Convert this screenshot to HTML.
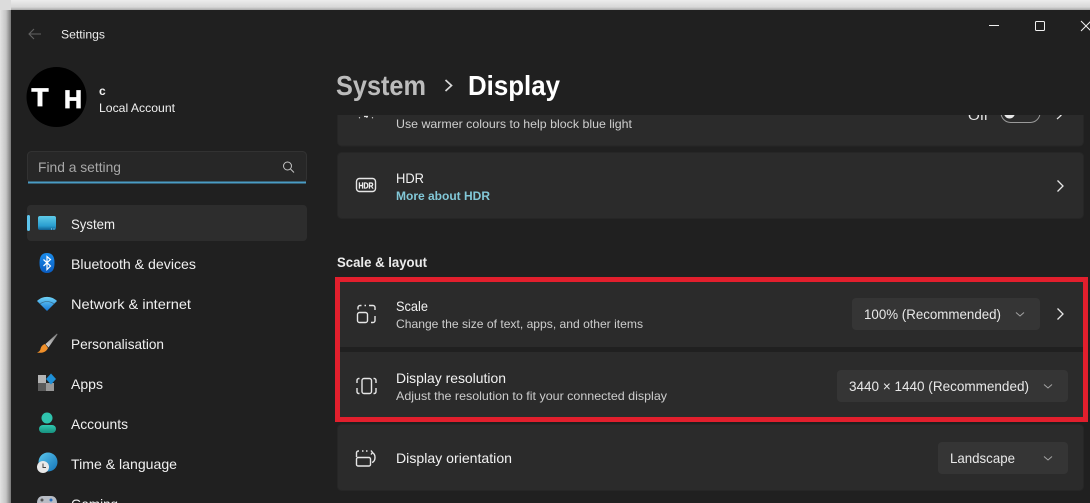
<!DOCTYPE html>
<html><head><meta charset="utf-8"><title>Settings</title>
<style>
html,body{margin:0;padding:0;background:#202020;width:1090px;height:503px;overflow:hidden}
svg{display:block}
text{font-family:"Liberation Sans",sans-serif;white-space:pre}
.n{font-size:14px;fill:#f0f0f0}
.t{font-size:14px;fill:#f2f2f2}
.s{font-size:12px;fill:#cdcdcd}
.d{font-size:14px;fill:#e8e8e8}
.c{fill:none;stroke:#a4a4a4;stroke-width:1}
.i{fill:none;stroke:#e6e6e6;stroke-width:1.4}
.card{fill:#2b2b2b;stroke:#262626;stroke-width:1}
.dd{fill:#353535}
</style></head><body>
<svg width="1090" height="503" viewBox="0 0 1090 503" xmlns="http://www.w3.org/2000/svg">
<defs>
<linearGradient id="gl" x1="0" x2="1" y1="0" y2="0"><stop offset="0" stop-color="#e2e2e2"/><stop offset=".55" stop-color="#c4c4c4"/><stop offset="1" stop-color="#777"/></linearGradient>
<linearGradient id="gt" x1="0" x2="0" y1="0" y2="1"><stop offset="0" stop-color="#ececec"/><stop offset=".7" stop-color="#d8d8d8"/><stop offset="1" stop-color="#a8a8a8"/></linearGradient>
<linearGradient id="sys" x1="0" x2="0" y1="0" y2="1"><stop offset="0" stop-color="#5fcbe8"/><stop offset=".7" stop-color="#2a9ed0"/><stop offset="1" stop-color="#0f5f92"/></linearGradient>
<linearGradient id="bt" x1="0" x2="0" y1="0" y2="1"><stop offset="0" stop-color="#1a8cec"/><stop offset="1" stop-color="#0a5cc0"/></linearGradient>
<linearGradient id="wf" x1="0" x2="0" y1="0" y2="1"><stop offset="0" stop-color="#6fd2f5"/><stop offset="1" stop-color="#1578d8"/></linearGradient>
<linearGradient id="ac" x1="0" x2="0" y1="0" y2="1"><stop offset="0" stop-color="#30c8b0"/><stop offset="1" stop-color="#17907f"/></linearGradient>
<linearGradient id="gb" x1="0" x2="1" y1="0" y2="1"><stop offset="0" stop-color="#5cc8ee"/><stop offset="1" stop-color="#1473b8"/></linearGradient>
<linearGradient id="br" x1="1" x2="0" y1="0" y2="1"><stop offset="0" stop-color="#777"/><stop offset="1" stop-color="#d8d8d8"/></linearGradient>
</defs>

<rect width="1090" height="503" fill="#202020"/>
<rect x="0" y="0" width="11" height="503" fill="url(#gl)"/>
<rect x="0" y="0" width="1090" height="10" fill="url(#gt)"/>
<rect x="0" y="0" width="11" height="10" fill="#dcdcdc"/>
<path d="M11 503V15a5 5 0 0 1 5-5H1090V503Z" fill="#202020"/>

<!-- title bar -->
<path d="M41 34H29M34 29l-5 5 5 5" fill="none" stroke="#626262" stroke-width="1.1"/>
<text x="61" y="38.500" font-size="12" fill="#ececec" textLength="44" lengthAdjust="spacingAndGlyphs">Settings</text>
<path d="M989 25.500H999" stroke="#f0f0f0" stroke-width="1"/>
<rect x="1035.500" y="21.500" width="9" height="9" fill="none" stroke="#f0f0f0" stroke-width="1" rx="1"/>
<path d="M1081 21l10 10M1091 21l-10 10" stroke="#f0f0f0" stroke-width="1"/>

<!-- avatar -->
<circle cx="56.500" cy="97" r="30" fill="#000"/>
<text x="31.500" y="106" font-size="25" font-weight="700" fill="#fff" stroke="#fff" stroke-width=".8" textLength="17" lengthAdjust="spacingAndGlyphs">T</text>
<text x="64" y="108" font-size="25" font-weight="700" fill="#fff" stroke="#fff" stroke-width=".8" textLength="18" lengthAdjust="spacingAndGlyphs">H</text>
<text x="99" y="95" font-size="12" font-weight="700" fill="#f0f0f0">c</text>
<text x="99" y="112" font-size="12" fill="#f0f0f0" textLength="76" lengthAdjust="spacingAndGlyphs">Local Account</text>

<!-- search -->
<rect x="27.500" y="151.500" width="279" height="31" rx="4" fill="#272727" stroke="#323232" stroke-width="1"/>
<path d="M28 182.500H306" stroke="#4a9cc5" stroke-width="2"/>
<text x="38" y="172" font-size="14" fill="#a8a8a8" textLength="83" lengthAdjust="spacingAndGlyphs">Find a setting</text>
<circle cx="287.500" cy="166" r="4" fill="none" stroke="#c4c4c4" stroke-width="1"/>
<path d="M290.500 169l3.500 3.500" stroke="#c4c4c4" stroke-width="1"/>

<!-- nav -->
<rect x="27" y="205" width="280" height="36" rx="4" fill="#2d2d2d"/>
<rect x="27" y="215" width="3" height="16" rx="1.500" fill="#5ec4ec"/>
<rect x="38" y="216" width="18" height="14" rx="2" fill="url(#sys)"/>
<path d="M51 229h1M53.500 229h1" stroke="#9fdcf2" stroke-width="1"/>
<text x="71" y="229" class="n" textLength="44" lengthAdjust="spacingAndGlyphs">System</text>

<path d="M47 253c5 0 7.500 3 7.500 10s-2.500 10-7.500 10-7.500-3-7.500-10 2.500-10 7.500-10z" fill="url(#bt)"/>
<path d="M43.500 259.500l7 6.500-3.500 3.500v-13l3.500 3-7 6.500" fill="none" stroke="#fff" stroke-width="1.200"/>
<text x="71" y="269" class="n" textLength="125" lengthAdjust="spacingAndGlyphs">Bluetooth &amp; devices</text>

<path d="M37 301c5.500-5.500 14.500-5.500 20 0l-10 10z" fill="url(#wf)"/>
<path d="M40 304c4-3.200 10-3.200 14 0" fill="none" stroke="#1f1f1f" stroke-width=".6" opacity=".5"/>
<text x="71" y="309" class="n" textLength="120" lengthAdjust="spacingAndGlyphs">Network &amp; internet</text>

<path d="M57 333.500l-11.500 10.500 3 3.500 9-13z" fill="url(#br)"/>
<path d="M45 344c-3 1-4 3-4.500 5-.4 2-2 3-3.500 3.500 4 .8 9 .3 11-4.500z" fill="#f0902a"/>
<text x="71" y="349" class="n" textLength="93" lengthAdjust="spacingAndGlyphs">Personalisation</text>

<rect x="38" y="375" width="8" height="8" fill="#b4b4b4"/>
<rect x="38" y="383" width="8" height="8" fill="#5a5a5a"/>
<rect x="46" y="383" width="8" height="8" fill="#989898"/>
<path d="M51 373.500l5 5.500-5 5.500-5-5.500z" fill="#1e90d8"/>
<text x="71" y="389" class="n" textLength="32" lengthAdjust="spacingAndGlyphs">Apps</text>

<circle cx="47" cy="418" r="5.500" fill="#2fc4ae"/>
<rect x="39" y="425" width="17" height="8" rx="4" fill="url(#ac)"/>
<text x="71" y="429" class="n" textLength="57" lengthAdjust="spacingAndGlyphs">Accounts</text>

<circle cx="48" cy="462" r="9.500" fill="url(#gb)"/>
<circle cx="43" cy="467" r="6" fill="#e8e8e8"/>
<path d="M43 463.500v4h3" fill="none" stroke="#444" stroke-width="1"/>
<text x="71" y="469" class="n" textLength="106" lengthAdjust="spacingAndGlyphs">Time &amp; language</text>

<path d="M37 503c0-4 2-7 6-7h8c4 0 6 3 6 7z" fill="#b8bcc4"/>
<circle cx="51" cy="500" r="1.500" fill="#2a6fc0"/>
<circle cx="42" cy="500" r="1.500" fill="#555"/>
<text x="71" y="509" class="n" textLength="47" lengthAdjust="spacingAndGlyphs">Gaming</text>

<!-- top clipped card -->
<rect x="337.500" y="95" width="746" height="51" rx="4" class="card"/>
<path d="M359 118l1 -.5M366 117h1.500M372 118l1 -.5M364 116.500h4" stroke="#e0e0e0" stroke-width="1.200" fill="none"/>
<text x="396" y="128" font-size="12" fill="#cfcfcf" textLength="236" lengthAdjust="spacingAndGlyphs">Use warmer colours to help block blue light</text>
<text x="968" y="120" font-size="14" fill="#e8e8e8" textLength="20" lengthAdjust="spacingAndGlyphs">Off</text>
<rect x="1001" y="103" width="39" height="19.500" rx="9.700" fill="none" stroke="#9a9a9a" stroke-width="1"/>
<circle cx="1009.500" cy="113" r="5.500" fill="#e8e8e8"/>
<path d="M1057 112l4 3.500-4 3.500" fill="none" stroke="#e0e0e0" stroke-width="1.200"/>
<rect x="320" y="60" width="770" height="55" fill="#202020"/>

<!-- heading -->
<text x="336" y="95" font-size="28" font-weight="700" fill="#bcbcbc" textLength="90" lengthAdjust="spacingAndGlyphs">System</text>
<path d="M445.500 80l6 5.500-6 5.500" fill="none" stroke="#d8d8d8" stroke-width="1.700"/>
<text x="468" y="95" font-size="28" font-weight="700" fill="#fff" textLength="92" lengthAdjust="spacingAndGlyphs">Display</text>

<!-- HDR -->
<rect x="337.500" y="152.500" width="746" height="66" rx="4" class="card"/>
<rect x="356.500" y="178.500" width="19" height="13" rx="3" fill="none" stroke="#e6e6e6" stroke-width="1.400"/>
<text x="366" y="188.500" font-size="8.500" font-weight="700" text-anchor="middle" fill="#efefef" stroke="#efefef" stroke-width=".25" textLength="15" lengthAdjust="spacingAndGlyphs">HDR</text>
<text x="396" y="183" class="t" textLength="28" lengthAdjust="spacingAndGlyphs">HDR</text>
<text x="396" y="200" font-size="12" font-weight="700" fill="#82c8d8" textLength="94" lengthAdjust="spacingAndGlyphs">More about HDR</text>
<path d="M1057.500 180.500l5.500 5.500-5.500 5.500" fill="none" stroke="#e6e6e6" stroke-width="1.300"/>

<text x="337" y="267" font-size="14" font-weight="700" fill="#ececec" textLength="90" lengthAdjust="spacingAndGlyphs">Scale &amp; layout</text>

<!-- Scale / resolution -->
<rect x="337" y="280" width="747" height="67" fill="#2b2b2b"/>
<rect x="337" y="352" width="747" height="67" fill="#2b2b2b"/>

<rect x="357.500" y="312.500" width="10" height="10" rx="2" class="i"/>
<path d="M358 309.500v-2a2 2 0 0 1 2-2h1.500M364.500 305.500h1.500M369 305.500h4a2 2 0 0 1 2 2v2.500M375 316v4.500a2 2 0 0 1-2 2h-2" class="i"/>
<text x="396" y="311" class="t" textLength="32" lengthAdjust="spacingAndGlyphs">Scale</text>
<text x="396" y="328" class="s" textLength="247" lengthAdjust="spacingAndGlyphs">Change the size of text, apps, and other items</text>
<rect x="852" y="298" width="188" height="32" rx="4" class="dd"/>
<text x="864" y="319" class="d" textLength="137" lengthAdjust="spacingAndGlyphs">100% (Recommended)</text>
<path d="M1016 312.500l4 3.500 4-3.500" class="c"/>
<path d="M1057.500 308.500l5.500 5.500-5.500 5.500" fill="none" stroke="#e6e6e6" stroke-width="1.300"/>

<rect x="362" y="378.500" width="9.500" height="15" rx="2" class="i"/>
<path d="M359.500 378.500h-1a2 2 0 0 0-1.500 2v2.500M357 388v3.500a2 2 0 0 0 1.500 2h1M373.500 378.500h1a2 2 0 0 1 1.500 2v2.500M376 388v3.500a2 2 0 0 1-1.500 2h-1" class="i"/>
<text x="396" y="383" class="t" textLength="110" lengthAdjust="spacingAndGlyphs">Display resolution</text>
<text x="396" y="400" class="s" textLength="271" lengthAdjust="spacingAndGlyphs">Adjust the resolution to fit your connected display</text>
<rect x="837" y="370" width="231" height="32" rx="4" class="dd"/>
<text x="849" y="391" class="d" textLength="180" lengthAdjust="spacingAndGlyphs">3440 × 1440 (Recommended)</text>
<path d="M1044 384.500l4 3.500 4-3.500" class="c"/>

<rect x="337.500" y="279.500" width="748" height="140" fill="none" stroke="#e21f2d" stroke-width="5"/>

<!-- orientation -->
<rect x="337.500" y="424.500" width="746" height="66" rx="4" class="card"/>
<rect x="356.500" y="457.500" width="14" height="8.500" rx="1.500" class="i"/>
<path d="M356.500 457v-4a2 2 0 0 1 1.500-2h1M362 451h1.500M366 451h1.500" class="i"/>
<path d="M372 452.500c4 1.500 4 8.500 0 10M371 454.500l1.500-2-1.500-2" class="i"/>
<text x="396" y="463" class="t" textLength="116" lengthAdjust="spacingAndGlyphs">Display orientation</text>
<rect x="938" y="442" width="130" height="32" rx="4" class="dd"/>
<text x="950" y="463" class="d" textLength="65" lengthAdjust="spacingAndGlyphs">Landscape</text>
<path d="M1044 456.500l4 3.500 4-3.500" class="c"/>
</svg>
</body></html>
